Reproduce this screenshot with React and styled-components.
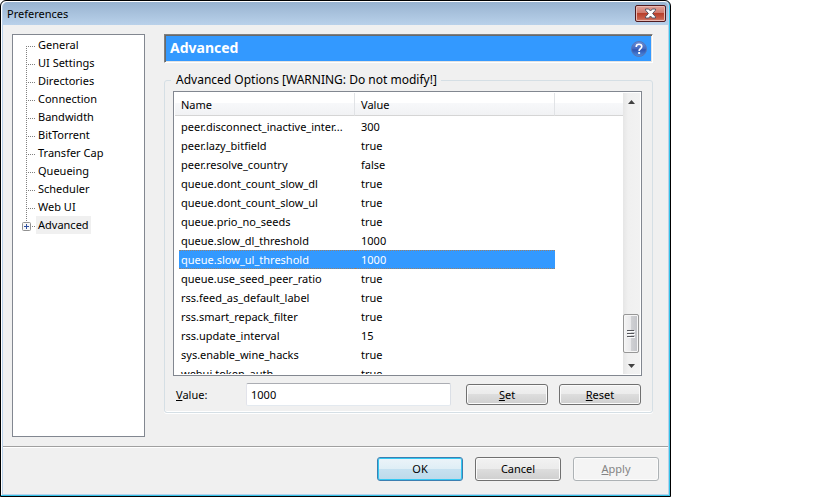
import React, { useState } from "react";
import styled, { createGlobalStyle, css } from "styled-components";

const GlobalStyle = createGlobalStyle`
  * { box-sizing: border-box; }
  body {
    margin: 0;
    background: #fff;
    color: #000;
    font: 11px/18px "Noto Sans", "Open Sans", sans-serif;
  }
  button, input { font: inherit; color: inherit; margin: 0; }
`;

const Window = styled.main`
  display: flex;
  flex-direction: column;
  height: 100vh;
  min-height: 400px;
  margin-right: 148px;
  border: 1px solid #000;
  border-radius: 6px 6px 0 0;
  background: #b9d1ea;
  box-shadow: inset -1px -1px #35c3e8, inset 1px 1px #fff;
  padding: 1px 2px 2px 2px;
`;

const TitleBar = styled.header`
  display: flex;
  justify-content: space-between;
  align-items: flex-start;
  flex: none;
  height: 23px;
  padding: 3px 2px 0 4px;
  border-radius: 5px 5px 0 0;
  background: linear-gradient(#98b3d0, #b9d1ea);
`;

const Title = styled.h1`
  margin: 0;
  font: inherit;
`;

const CloseButton = styled.button`
  display: grid;
  place-items: center;
  width: 31px;
  height: 17px;
  padding: 0;
  border: 1px solid #4f1a1f;
  border-radius: 2px;
  background: linear-gradient(#dfa29a, #d0796c 46%, #b8402c 50%, #c9604c 85%, #d68a78);
  box-shadow: inset 0 0 0 1px #e9b9b2;
`;

const Body = styled.div`
  display: flex;
  flex: 1;
  min-height: 0;
  gap: 19px;
  padding: 9px 15px 9px 9px;
  background: #f0f0f0;
`;

const Tree = styled.ul`
  flex: none;
  width: 133px;
  margin: 0;
  padding: 1px 0 0 9px;
  list-style: none;
  border: 1px solid #828790;
  background: #fff;
`;

const Branch = styled.li`
  display: grid;
  grid-template-columns: 14px auto;
  justify-content: start;
  align-items: center;
  height: 18px;
`;

const Lines = styled.svg`
  display: block;
  width: 14px;
  height: 18px;
`;

const BranchButton = styled.button`
  height: 18px;
  padding: 0 2px;
  border: 0;
  line-height: 18px;
  background: ${(p) => (p.$active ? "#f0f0f0" : "transparent")};
`;

const Page = styled.section`
  display: flex;
  flex-direction: column;
  flex: 1;
  min-width: 0;
  padding-bottom: 24px;
`;

const Banner = styled.div`
  display: flex;
  justify-content: space-between;
  align-items: center;
  flex: none;
  height: 29px;
  padding: 0 5px;
  border: 1px solid;
  border-color: #808080 #fff #fff #808080;
  background: #3399ff;
  box-shadow: inset 1px 1px #696969, inset -1px -1px #e3e3e3;
`;

const BannerTitle = styled.h2`
  margin: 0;
  padding-bottom: 2px;
  font: bold 14px/22px "Noto Sans", "Open Sans", sans-serif;
  color: #fff;
`;

const HelpButton = styled.button`
  display: grid;
  padding: 0;
  border: 0;
  background: none;
`;

const Options = styled.fieldset`
  display: flex;
  flex-direction: column;
  flex: 1;
  min-width: 0;
  min-height: 0;
  margin: 8px 0 0;
  padding: 2px 10px 6px 8px;
  border: 1px solid #d5dfe5;
  border-radius: 3px;
  box-shadow: inset 0 -1px #fff, 0 1px #fff;
`;

const Legend = styled.legend`
  height: 18px;
  margin-left: -2px;
  padding: 0 4px 0 5px;
  font-size: 12px;
`;

const ListFrame = styled.div`
  display: flex;
  flex: 1;
  min-height: 0;
  padding: 1px;
  border: 1px solid #828790;
  background: #fff;
`;

const ListView = styled.div`
  flex: 1;
  min-width: 0;
  overflow: hidden;
`;

const Table = styled.table`
  width: 100%;
  table-layout: fixed;
  border-collapse: separate;
  border-spacing: 0;
`;

const HeadCell = styled.th`
  width: ${(p) => p.$width || "auto"};
  height: 23px;
  padding: 1px 6px 0;
  text-align: left;
  font-weight: normal;
  border-bottom: 1px solid #d5d5d5;
  border-right: ${(p) => (p.$width ? "1px solid #e1e3e6" : "0")};
  background: linear-gradient(#fff 45%, #f7f8fa 45%, #f1f2f4);
`;

const Spacer = styled.tbody`
  td { height: 1px; padding: 0; }
`;

const Row = styled.tr`
  height: 19px;
`;

const Cell = styled.td`
  padding: 0;
  padding-left: ${(p) => (p.$first ? "4px" : "0")};
`;

const CellText = styled.div`
  height: 19px;
  padding: 0 2px 0 ${(p) => (p.$first ? "2px" : "6px")};
  line-height: 19px;
  white-space: nowrap;
  overflow: hidden;
  text-overflow: ellipsis;
  ${(p) =>
    p.$selected &&
    css`
      color: #fff;
      background: #3399ff;
      border: 0 dotted #9c8068;
      border-width: 1px 0;
      line-height: 17px;
    `}
`;

const ScrollBar = styled.div`
  display: flex;
  flex-direction: column;
  flex: none;
  width: 17px;
  background: linear-gradient(90deg, #e6e6e6, #f0f0f0 30%, #f2f2f2);
`;

const ScrollButton = styled.button`
  display: grid;
  place-items: center;
  flex: none;
  height: 17px;
  padding: 0;
  border: 0;
  background: transparent;
`;

const ScrollTrack = styled.div`
  display: flex;
  flex-direction: column;
  justify-content: flex-end;
  flex: 1;
  padding: 0 1px 4px;
  padding-left: 0;
`;

const ScrollThumb = styled.div`
  display: grid;
  place-items: center;
  height: 39px;
  border: 1px solid #979797;
  border-radius: 2px;
  background: linear-gradient(90deg, #f4f4f4, #e9e9eb 48%, #d0d1d4 52%, #c2c3c8);
  box-shadow: inset 0 0 0 1px #f6f6f6;
`;

const EditRow = styled.div`
  display: flex;
  align-items: center;
  flex: none;
  margin-top: 7px;
`;

const ValueLabel = styled.label`
  width: 73px;
  padding-left: 3px;
`;

const ValueInput = styled.input`
  flex: 1;
  min-width: 0;
  height: 23px;
  padding: 0 4px 1px;
  border: 1px solid;
  border-color: #abadb3 #dbdfe6 #e3e9ef #e2e3ea;
  border-radius: 2px;
  background: #fff;
`;

const EditActions = styled.div`
  display: flex;
  gap: 11px;
  padding: 0 1px 0 15px;
`;

const Button = styled.button`
  flex: none;
  width: 86px;
  height: 24px;
  padding: 0;
  border: 1px solid #707070;
  border-radius: 3px;
  background: linear-gradient(#f2f2f2, #ebebeb 49%, #dddddd 50%, #cfcfcf);
  box-shadow: inset 0 0 0 1px #fbfbfb;
  line-height: 22px;
  ${(p) =>
    p.$small &&
    css`
      width: 82px;
      height: 21px;
      line-height: 19px;
    `}
  ${(p) =>
    p.$primary &&
    css`
      border-color: #3c7fb1;
      background: linear-gradient(#ecf4f9, #dfeef6 49%, #c6e1f0 50%, #bcd9ea);
      box-shadow: inset 0 0 0 1px #33c8f2;
    `}
  &:disabled {
    border-color: #adb2b5;
    background: #f4f4f4;
    color: #838383;
  }
`;

const Footer = styled.footer`
  display: flex;
  justify-content: flex-end;
  flex: none;
  gap: 12px;
  height: 48px;
  padding: 10px 9px 0;
  border-top: 1px solid #a0a0a0;
  background: #f0f0f0;
  box-shadow: inset 0 1px #fff;
`;

const PAGES = [
  "General", "UI Settings", "Directories", "Connection", "Bandwidth", "BitTorrent",
  "Transfer Cap", "Queueing", "Scheduler", "Web UI", "Advanced",
];

const SETTINGS = [
  ["peer.disconnect_inactive_inter...", "300"],
  ["peer.lazy_bitfield", "true"],
  ["peer.resolve_country", "false"],
  ["queue.dont_count_slow_dl", "true"],
  ["queue.dont_count_slow_ul", "true"],
  ["queue.prio_no_seeds", "true"],
  ["queue.slow_dl_threshold", "1000"],
  ["queue.slow_ul_threshold", "1000"],
  ["queue.use_seed_peer_ratio", "true"],
  ["rss.feed_as_default_label", "true"],
  ["rss.smart_repack_filter", "true"],
  ["rss.update_interval", "15"],
  ["sys.enable_wine_hacks", "true"],
  ["webui.token_auth", "true"],
];

function BranchLines({ first, last }) {
  const stroke = { stroke: "#808080", strokeDasharray: "1 1" };
  return (
    <Lines viewBox="0 0 14 18" aria-hidden="true">
      {!last && <path d={first ? "M4.5 10V18" : "M4.5 0V18"} {...stroke} />}
      {last && <path d="M4.5 0V6" {...stroke} />}
      <path d={last ? "M10 10.5H13" : "M4 10.5H13"} {...stroke} />
      {last && (
        <>
          <rect x="0.5" y="6.5" width="8" height="8" rx="1" fill="#f6f6f6" stroke="#919191" />
          <path d="M2 10.5H7M4.5 8V13" stroke="#2f4f9f" />
        </>
      )}
    </Lines>
  );
}

function CloseIcon() {
  return (
    <svg width="13" height="11" viewBox="0 0 13 11" aria-hidden="true">
      <path
        d="M1.5 1H4.7L6.5 3L8.3 1H11.5V2.2L8.6 5.5L11.5 8.8V10H8.3L6.5 8L4.7 10H1.5V8.8L4.4 5.5L1.5 2.2Z"
        fill="#fff"
        stroke="#535666"
      />
    </svg>
  );
}

function HelpIcon() {
  return (
    <svg width="16" height="16" viewBox="0 0 16 16" aria-hidden="true">
      <defs>
        <linearGradient id="help-fill" x1="0" y1="0" x2="0" y2="1">
          <stop offset="0" stopColor="#6f8fd6" />
          <stop offset="0.5" stopColor="#4068c2" />
          <stop offset="0.55" stopColor="#2f55b2" />
          <stop offset="1" stopColor="#4f8fe0" />
        </linearGradient>
      </defs>
      <circle cx="8" cy="8" r="7.5" fill="url(#help-fill)" stroke="#5577b8" />
      <path
        d="M5.2 5.9Q5.2 3.3 8 3.3Q10.8 3.3 10.8 5.6Q10.8 6.9 9.4 7.7Q8.1 8.5 8.1 10"
        fill="none"
        stroke="#fff"
        strokeWidth="1.6"
      />
      <rect x="7.2" y="11" width="1.9" height="2" fill="#fff" />
    </svg>
  );
}

function Arrow({ up }) {
  return (
    <svg width="7" height="4" viewBox="0 0 7 4" aria-hidden="true">
      <path d={up ? "M3.5 0L7 4H0Z" : "M0 0H7L3.5 4Z"} fill="#404040" />
    </svg>
  );
}

export default function App() {
  const [page, setPage] = useState("Advanced");
  const [selected, setSelected] = useState(7);
  const [value, setValue] = useState("1000");

  const choose = (index) => {
    setSelected(index);
    setValue(SETTINGS[index][1]);
  };

  return (
    <>
      <GlobalStyle />
      <Window>
        <TitleBar>
          <Title>Preferences</Title>
          <CloseButton type="button" aria-label="Close"><CloseIcon /></CloseButton>
        </TitleBar>
        <Body>
          <Tree>
            {PAGES.map((name, i) => (
              <Branch key={name}>
                <BranchLines first={i === 0} last={i === PAGES.length - 1} />
                <BranchButton type="button" $active={name === page} onClick={() => setPage(name)}>
                  {name}
                </BranchButton>
              </Branch>
            ))}
          </Tree>
          <Page>
            <Banner>
              <BannerTitle>{page}</BannerTitle>
              <HelpButton type="button" aria-label="Help"><HelpIcon /></HelpButton>
            </Banner>
            <Options>
              <Legend>Advanced Options [WARNING: Do not modify!]</Legend>
              <ListFrame>
                <ListView>
                  <Table>
                    <thead>
                      <tr>
                        <HeadCell scope="col" $width="180px">Name</HeadCell>
                        <HeadCell scope="col" $width="200px">Value</HeadCell>
                        <HeadCell aria-hidden="true" />
                      </tr>
                    </thead>
                    <Spacer><tr><td colSpan={3} /></tr></Spacer>
                    <tbody>
                      {SETTINGS.map(([name, setting], i) => (
                        <Row key={name} onClick={() => choose(i)} aria-selected={i === selected}>
                          <Cell $first><CellText $first $selected={i === selected}>{name}</CellText></Cell>
                          <Cell><CellText $selected={i === selected}>{setting}</CellText></Cell>
                          <Cell />
                        </Row>
                      ))}
                    </tbody>
                  </Table>
                </ListView>
                <ScrollBar>
                  <ScrollButton type="button" aria-label="Scroll up"><Arrow up /></ScrollButton>
                  <ScrollTrack>
                    <ScrollThumb>
                      <svg width="8" height="9" viewBox="0 0 8 9" aria-hidden="true">
                        <path d="M0 1.5H7M0 4.5H7M0 7.5H7" stroke="#55565a" />
                        <path d="M1 2.5H8M1 5.5H8M1 8.5H8" stroke="#fff" />
                      </svg>
                    </ScrollThumb>
                  </ScrollTrack>
                  <ScrollButton type="button" aria-label="Scroll down"><Arrow /></ScrollButton>
                </ScrollBar>
              </ListFrame>
              <EditRow>
                <ValueLabel htmlFor="setting-value"><u>V</u>alue:</ValueLabel>
                <ValueInput id="setting-value" value={value} onChange={(e) => setValue(e.target.value)} />
                <EditActions>
                  <Button type="button" $small><u>S</u>et</Button>
                  <Button type="button" $small><u>R</u>eset</Button>
                </EditActions>
              </EditRow>
            </Options>
          </Page>
        </Body>
        <Footer>
          <Button type="button" $primary>OK</Button>
          <Button type="button">Cancel</Button>
          <Button type="button" disabled><u>A</u>pply</Button>
        </Footer>
      </Window>
    </>
  );
}
